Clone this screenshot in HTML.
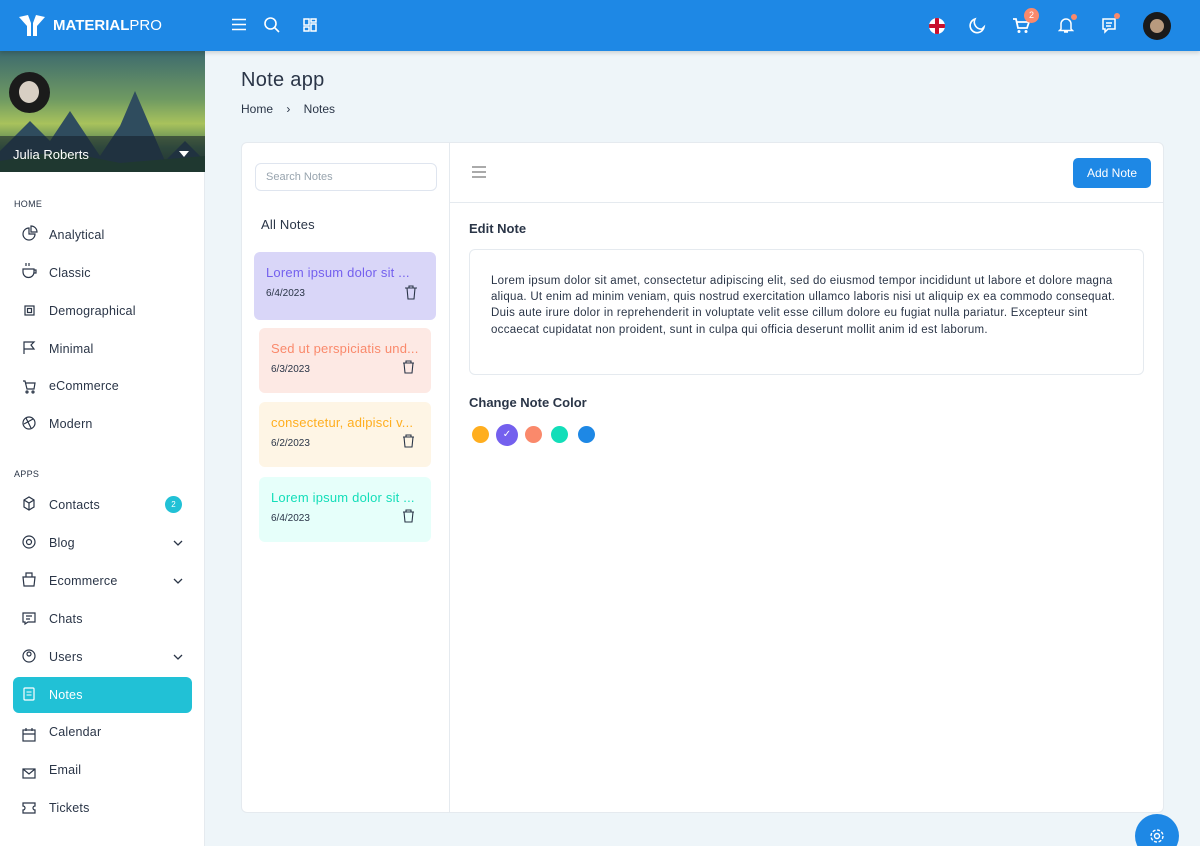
<!DOCTYPE html>
<html><head><meta charset="utf-8"><style>
*{box-sizing:border-box;margin:0;padding:0}
html{width:1200px;height:846px;overflow:hidden}
body{width:1200px;height:846px;overflow:hidden;background:#eef5f9;font-family:"Liberation Sans",sans-serif;color:#2a3547;position:relative}
.top{position:absolute;left:0;top:0;width:1200px;height:51px;background:#1e88e5;box-shadow:0 2px 4px rgba(0,0,0,.15);z-index:2}
.abs{position:absolute}
.side{position:absolute;left:0;top:51px;width:205px;height:795px;background:#fff;border-right:1px solid #e5eaef}
.prof{position:absolute;left:0;top:0;width:205px;height:121px;background:linear-gradient(180deg,#3d6a6e 0%,#6f9a62 40%,#a8c25c 60%,#4f7b55 80%,#2c4a3e 100%);overflow:hidden}
.name{position:absolute;left:0;top:85px;width:205px;height:36px;background:rgba(20,30,40,.55);color:#fff;font-size:13px;padding:11px 13px}
.sec{position:absolute;left:14px;font-size:9px;color:#2a3547;letter-spacing:.3px}
.it{position:absolute;left:49px;font-size:12.5px;letter-spacing:.2px;color:#2a3547}
.card{position:absolute;left:241px;top:142px;width:923px;height:671px;background:#fff;border-radius:6px;border:1px solid #e5eaef}
.note{position:absolute;border-radius:6px;padding:13px 12px}
.note .t{font-size:13px;letter-spacing:.2px;white-space:nowrap}
.note .d{font-size:10px;color:#2a3547;margin-top:8px}
.dot{position:absolute;border-radius:50%;width:17px;height:17px;top:426px}
</style></head><body>
<div class="top">
 <svg class="abs" style="left:19px;top:15px" width="26" height="21" viewBox="0 0 26 21"><path d="M0 2 L9 0 L12 8 L12 21 L8 21 L8 11 Z M26 2 L17 0 L14 8 L14 21 L18 21 L18 11 Z" fill="#fff"/></svg>
 <div class="abs" style="left:53px;top:17px;color:#fff;font-size:15px"><b>MATERIAL</b>PRO</div>
 <svg class="abs" style="left:232px;top:18px" width="14" height="13"><path d="M0 1.5H14M0 6.5H14M0 11.5H14" stroke="#fff" stroke-width="1.6"/></svg>
 <svg class="abs" style="left:264px;top:17px" width="16" height="16"><circle cx="6.5" cy="6.5" r="5.5" stroke="#fff" stroke-width="1.6" fill="none"/><path d="M10.5 10.5L15 15" stroke="#fff" stroke-width="1.6"/></svg>
 <svg class="abs" style="left:303px;top:18px" width="14" height="14"><g stroke="#fff" stroke-width="1.5" fill="none"><rect x="1" y="1" width="5" height="6"/><rect x="8" y="1" width="5" height="3"/><rect x="1" y="9" width="5" height="4"/><rect x="8" y="6" width="5" height="7"/></g></svg>
 <div class="abs" style="left:929px;top:18px;width:16px;height:16px;border-radius:50%;background:#fff;overflow:hidden"><div class="abs" style="left:0;top:6px;width:16px;height:4px;background:#c8102e"></div><div class="abs" style="left:6px;top:0;width:4px;height:16px;background:#c8102e"></div></div>
 <svg class="abs" style="left:969px;top:17px" width="17" height="17"><path d="M13 12A7 7 0 0 1 6 2 A7 7 0 1 0 15 10Z" stroke="#fff" stroke-width="1.6" fill="none"/></svg>
 <svg class="abs" style="left:1013px;top:18px" width="17" height="16"><path d="M0 1H3L5 10H14L16 4H4" stroke="#fff" stroke-width="1.8" fill="none"/><circle cx="6" cy="13.5" r="1.5" fill="#fff"/><circle cx="13" cy="13.5" r="1.5" fill="#fff"/></svg>
 <div class="abs" style="left:1024px;top:8px;width:15px;height:15px;border-radius:50%;background:#fa896b;color:#fff;font-size:9px;text-align:center;line-height:15px">2</div>
 <svg class="abs" style="left:1058px;top:17px" width="16" height="17"><path d="M3 12V7a5 5 0 0 1 10 0v5l1.5 1.5h-13Z M6 15h4" stroke="#fff" stroke-width="1.5" fill="none"/></svg>
 <div class="abs" style="left:1071px;top:14px;width:6px;height:6px;border-radius:50%;background:#fa896b"></div>
 <svg class="abs" style="left:1101px;top:17px" width="16" height="17"><path d="M2 2H14V12H7L4 15V12H2Z M5 6H11M5 9H10" stroke="#fff" stroke-width="1.5" fill="none"/></svg>
 <div class="abs" style="left:1114px;top:13px;width:6px;height:6px;border-radius:50%;background:#fa896b"></div>
 <div class="abs" style="left:1143px;top:12px;width:28px;height:28px;border-radius:50%;background:#1a1a1a"><div style="margin:7px;width:14px;height:14px;border-radius:50%;background:#b89a7e"></div></div>
</div>
<div class="side">
 <div class="prof">
  <svg class="abs" style="left:0;top:40px" width="205" height="81"><path d="M0 60 L30 30 L50 50 L70 20 L100 65 L120 35 L135 0 L165 70 L185 50 L205 70 V81 H0Z" fill="#2f4c5e"/><path d="M0 81 V70 L60 60 L120 72 L205 65 V81Z" fill="#2d5a3a"/></svg>
  <div class="abs" style="left:9px;top:21px;width:41px;height:41px;border-radius:50%;background:#1b1b1b"><div style="margin:9px 10px;width:20px;height:22px;border-radius:50%;background:#d8cfc4"></div></div>
  <div class="name">Julia Roberts<span class="abs" style="right:16px;top:15px;border:5px solid transparent;border-top:6px solid #fff"></span></div>
 </div>
 <div class="sec" style="top:148px">HOME</div>
 <div class="it" style="top:177px">Analytical</div>
 <div class="it" style="top:215px">Classic</div>
 <div class="it" style="top:253px">Demographical</div>
 <div class="it" style="top:291px">Minimal</div>
 <div class="it" style="top:328px">eCommerce</div>
 <div class="it" style="top:366px">Modern</div>
 <div class="sec" style="top:418px">APPS</div>
 <div class="it" style="top:447px">Contacts</div>
 <div class="abs" style="left:165px;top:445px;width:17px;height:17px;border-radius:50%;background:#21c1d6;color:#fff;font-size:8px;text-align:center;line-height:17px">2</div>
 <div class="it" style="top:485px">Blog</div>
 <div class="it" style="top:523px">Ecommerce</div>
 <div class="it" style="top:561px">Chats</div>
 <div class="it" style="top:599px">Users</div>
 <div class="abs" style="left:13px;top:626px;width:179px;height:36px;border-radius:6px;background:#21c1d6"></div>
 <div class="it" style="top:637px;color:#fff">Notes</div>
 <div class="it" style="top:674px">Calendar</div>
 <div class="it" style="top:712px">Email</div>
 <div class="it" style="top:750px">Tickets</div>
 <svg class="abs" style="left:0;top:0" width="205" height="795"><g fill="none" stroke="#2a3547" stroke-width="1.2">
  <path d="M29 177A6 6 0 1 0 35 183H29Z M31 175V181H37A6 6 0 0 0 31 175Z"/><path d="M23 218H34V221A5 5 0 0 1 23 221Z M34 219H36V222H34 M26 212V215M29 212V215"/><rect x="25" y="255" width="9" height="9"/><rect x="27.5" y="257.5" width="4" height="4"/><path d="M24 303V291H34L31 294L34 298H24"/><path d="M23 330H25L27 338H34L35 332H26"/><circle cx="27" cy="341" r="1"/><circle cx="33" cy="341" r="1"/><circle cx="29" cy="372" r="6"/><path d="M26 367L31 377M24 373L33 368"/>
  <path d="M24 449L29 446L34 449V456L29 459L24 456Z M24 449L29 452L34 449M29 452V459"/><circle cx="29" cy="491" r="6"/><circle cx="29" cy="491" r="2.5"/><path d="M23 526H35L34 535H24Z M26 526V522H32V526"/><path d="M23 562H35V571H28L25 573V571H23Z M26 565H32M26 568H30"/><circle cx="29" cy="605" r="6"/><circle cx="29" cy="603" r="2"/><rect x="23" y="679" width="12" height="11"/><path d="M23 683H35M26 677V680M32 677V680"/><rect x="23" y="718" width="12" height="9"/><path d="M23 718L29 723L35 718"/><path d="M23 752H35V755A2 2 0 0 0 35 759V762H23V759A2 2 0 0 0 23 755Z"/>
  <path d="M174 490L178 494L182 490M174 528L178 532L182 528M174 604L178 608L182 604" stroke-width="1.3"/></g>
  <rect x="24" y="637" width="10" height="12" rx="1" fill="none" stroke="#fff" stroke-width="1.2"/><path d="M26.5 641H31.5M26.5 644H31.5" stroke="#fff"/></svg>
</div>
<div class="abs" style="left:241px;top:69px;font-size:20px;letter-spacing:.3px;color:#2a3547">Note app</div>
<div class="abs" style="left:241px;top:102px;font-size:12px;color:#2a3547">Home &nbsp;&nbsp;&nbsp;›&nbsp;&nbsp;&nbsp; Notes</div>
<div class="card">
 <div class="abs" style="left:207px;top:0;width:1px;height:669px;background:#e5eaef"></div>
 <div class="abs" style="left:208px;top:59px;width:713px;height:1px;background:#e5eaef"></div>
 <div class="abs" style="left:13px;top:20px;width:182px;height:28px;border:1px solid #dfe5ef;border-radius:6px;font-size:11px;color:#98a4ae;padding:7px 10px">Search Notes</div>
 <div class="abs" style="left:19px;top:74px;font-size:13px;letter-spacing:.2px">All Notes</div>
 <div class="note" style="left:12px;top:109px;width:182px;height:68px;background:#d9d6f8"><div class="t" style="color:#7460ee">Lorem ipsum dolor sit ...</div><div class="d">6/4/2023</div></div>
 <div class="note" style="left:17px;top:185px;width:172px;height:65px;background:#fde9e4"><div class="t" style="color:#fa896b">Sed ut perspiciatis und...</div><div class="d">6/3/2023</div></div>
 <div class="note" style="left:17px;top:259px;width:172px;height:65px;background:#fef5e5"><div class="t" style="color:#ffae1f">consectetur, adipisci v...</div><div class="d">6/2/2023</div></div>
 <div class="note" style="left:17px;top:334px;width:172px;height:65px;background:#e6fffa"><div class="t" style="color:#13deb9">Lorem ipsum dolor sit ...</div><div class="d">6/4/2023</div></div>
 <svg class="abs" style="left:0;top:0" width="207" height="400"><g fill="none" stroke="#2a3547" stroke-width="1.1"><path d="M163 145H175M167 145V143H171V145M165 145L166 156H172L173 145"/><path d="M161 220H172M164 220V218H169V220M162 220L163 230H170L171 220"/><path d="M161 294H172M164 294V292H169V294M162 294L163 304H170L171 294"/><path d="M161 369H172M164 369V367H169V369M162 369L163 379H170L171 369"/></g></svg>
 <svg class="abs" style="left:230px;top:23px" width="14" height="12"><path d="M0 1H14M0 6H14M0 11H14" stroke="#777" stroke-width="1.2"/></svg>
 <div class="abs" style="left:831px;top:15px;width:78px;height:30px;background:#1e88e5;border-radius:5px;color:#fff;font-size:12px;text-align:center;line-height:30px">Add Note</div>
 <div class="abs" style="left:227px;top:78px;font-size:13px;font-weight:bold">Edit Note</div>
 <div class="abs" style="left:227px;top:106px;width:675px;height:126px;border:1px solid #e5eaef;border-radius:6px;padding:23px 21px;font-size:11.5px;letter-spacing:.28px;line-height:16.2px;color:#2a3547">Lorem ipsum dolor sit amet, consectetur adipiscing elit, sed do eiusmod tempor incididunt ut labore et dolore magna aliqua. Ut enim ad minim veniam, quis nostrud exercitation ullamco laboris nisi ut aliquip ex ea commodo consequat. Duis aute irure dolor in reprehenderit in voluptate velit esse cillum dolore eu fugiat nulla pariatur. Excepteur sint occaecat cupidatat non proident, sunt in culpa qui officia deserunt mollit anim id est laborum.</div>
 <div class="abs" style="left:227px;top:252px;font-size:13px;font-weight:bold">Change Note Color</div>
</div>
<div class="dot" style="left:472px;background:#ffae1f"></div>
<div class="dot" style="left:496px;top:424px;width:22px;height:22px;background:#7460ee;color:#fff;font-size:10px;text-align:center;line-height:22px">✓</div>
<div class="dot" style="left:525px;background:#fa896b"></div>
<div class="dot" style="left:551px;background:#13deb9"></div>
<div class="dot" style="left:578px;background:#1e88e5"></div>
<div class="abs" style="left:1135px;top:814px;width:44px;height:44px;border-radius:50%;background:#1e88e5"><svg class="abs" style="left:14px;top:14px" width="16" height="16"><circle cx="8" cy="8" r="2.5" stroke="#fff" fill="none" stroke-width="1.4"/><circle cx="8" cy="8" r="6" stroke="#fff" fill="none" stroke-width="1.4" stroke-dasharray="3 1.7"/></svg></div>
</body></html>
